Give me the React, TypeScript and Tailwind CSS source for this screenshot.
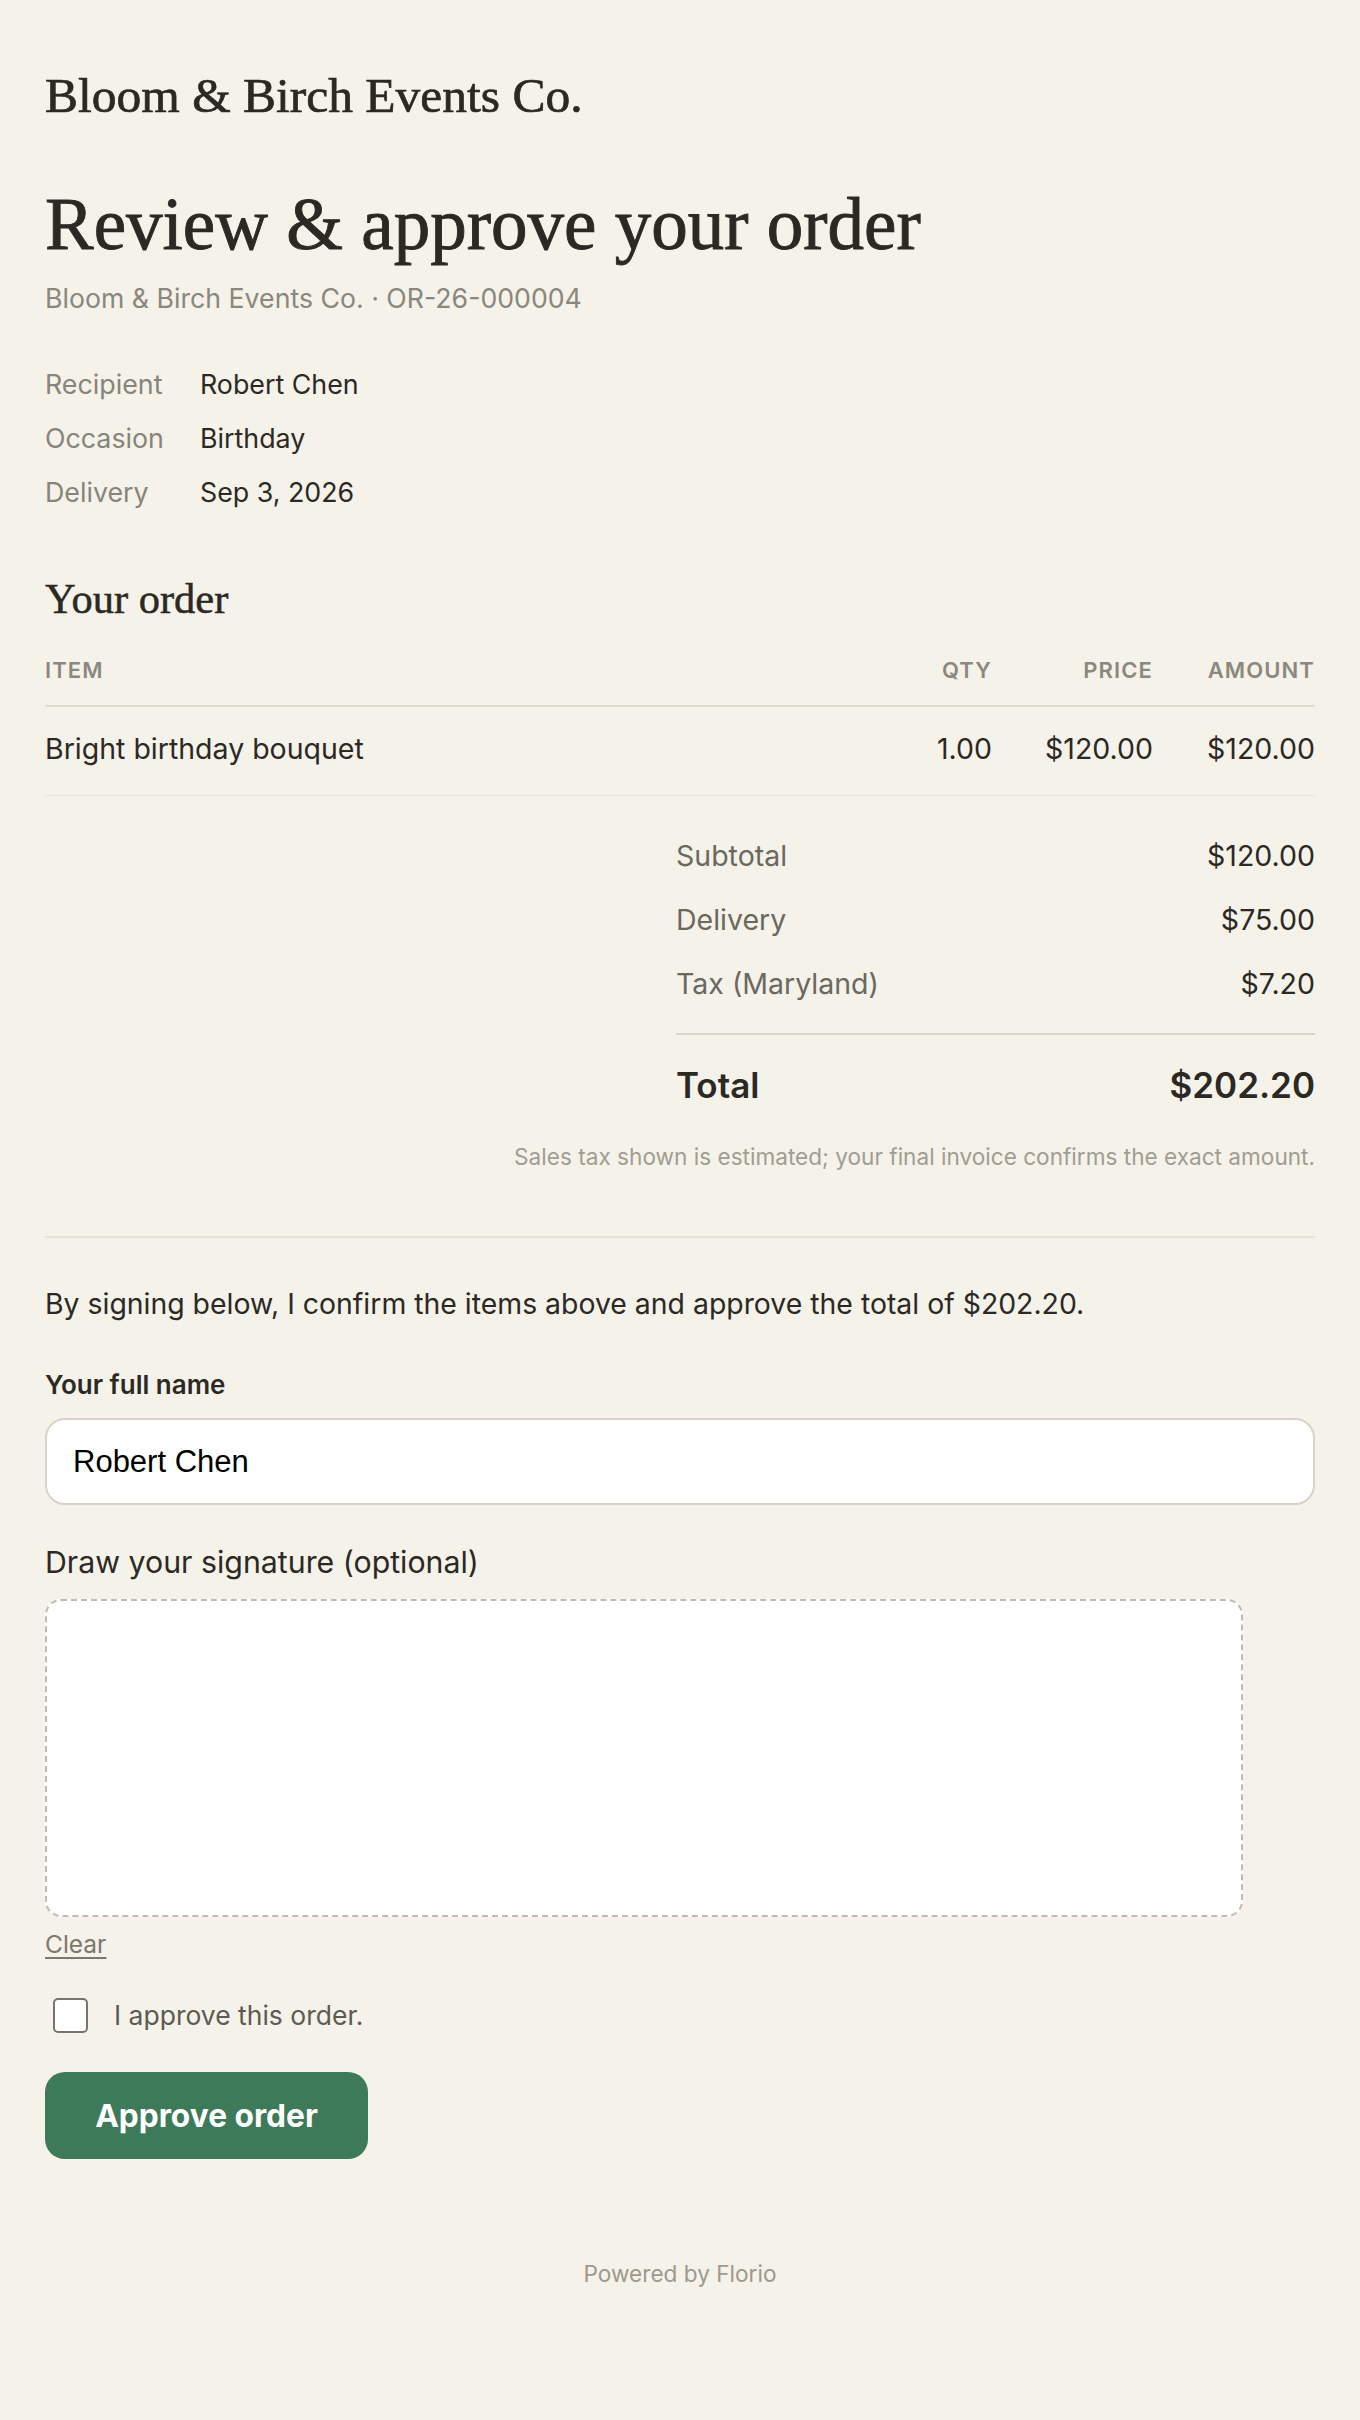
import { useState } from "react";

const details = [
  { label: "Recipient", value: "Robert Chen" },
  { label: "Occasion", value: "Birthday" },
  { label: "Delivery", value: "Sep 3, 2026" },
];

const lines = [
  { name: "Bright birthday bouquet", qty: "1.00", price: "$120.00", amount: "$120.00" },
];

const totals = [
  { label: "Subtotal", value: "$120.00" },
  { label: "Delivery", value: "$75.00" },
  { label: "Tax (Maryland)", value: "$7.20" },
];

const serif = "[font-family:'Liberation_Serif','DejaVu_Serif',serif]";

export default function App() {
  const [name, setName] = useState("Robert Chen");
  const [approved, setApproved] = useState(false);

  return (
    <div className="min-h-[2420px] bg-[#f5f2ea] px-[45px] pt-[68px] pb-[132px] text-[#2c2924] [font-family:Inter,'Noto_Sans',sans-serif]">
      <div className={`${serif} text-[49.5px] leading-[56px] text-[#2c2924] [-webkit-text-stroke:0.7px_#2c2924]`}>
        Bloom &amp; Birch Events Co.
      </div>

      <h1 className={`${serif} mt-[61px] text-[73px] leading-[80px] text-[#2c2924] [-webkit-text-stroke:0.9px_#2c2924]`}>
        Review &amp; approve your order
      </h1>
      <p className="mt-[16px] text-[26.7px] leading-[34px] text-[#8a877d]">
        Bloom &amp; Birch Events Co. · OR-26-000004
      </p>

      <div className="mt-[42px]">
        {details.map((row) => (
          <div key={row.label} className="flex h-[54px] items-center text-[26.8px] leading-[54px]">
            <span className="w-[155px] text-[#87847a]">{row.label}</span>
            <span className="text-[#2c2924]">{row.value}</span>
          </div>
        ))}
      </div>

      <h2 className={`${serif} mt-[56px] text-[42.5px] leading-[48px] text-[#2c2924] [-webkit-text-stroke:0.5px_#2c2924]`}>
        Your order
      </h2>

      <div className="mt-[32px]">
        <div className="flex border-b-2 border-[#dedbd1] pb-[20px] text-[22px] font-semibold uppercase leading-[30px] tracking-[0.05em] text-[#8b887d]">
          <span className="flex-1">Item</span>
          <span className="w-[100px] text-right">Qty</span>
          <span className="w-[161px] text-right">Price</span>
          <span className="w-[162px] text-right">Amount</span>
        </div>
        {lines.map((line) => (
          <div
            key={line.name}
            className="flex border-b border-[#e9e6dd] pt-[24px] pb-[28px] text-[28.5px] leading-[36px] text-[#2c2924]"
          >
            <span className="flex-1">{line.name}</span>
            <span className="w-[100px] text-right">{line.qty}</span>
            <span className="w-[161px] text-right">{line.price}</span>
            <span className="w-[162px] text-right">{line.amount}</span>
          </div>
        ))}
      </div>

      <div className="mt-[42px] ml-auto w-[639px]">
        <div className="flex flex-col gap-[28px]">
          {totals.map((row) => (
            <div key={row.label} className="flex justify-between text-[28.5px] leading-[36px]">
              <span className="text-[#6b685f]">{row.label}</span>
              <span className="text-[#2c2924]">{row.value}</span>
            </div>
          ))}
        </div>
        <div className="mt-[31px] flex justify-between border-t-2 border-[#d9d6cb] pt-[28px] text-[35px] font-semibold leading-[44px] text-[#2c2924]">
          <span>Total</span>
          <span>$202.20</span>
        </div>
      </div>
      <p className="mt-[35px] text-right text-[22.6px] leading-[30px] text-[#a09d92]">
        Sales tax shown is estimated; your final invoice confirms the exact amount.
      </p>

      <div className="mt-[64px] h-[2px] bg-[#e4e1d7]" />

      <p className="mt-[48px] text-[28.4px] leading-[36px] text-[#2c2924]">
        By signing below, I confirm the items above and approve the total of $202.20.
      </p>

      <label className="mt-[47px] block text-[26px] font-semibold leading-[32px] text-[#2c2924]">
        Your full name
      </label>
      <input
        value={name}
        onChange={(e) => setName(e.target.value)}
        className="mt-[17px] block h-[87px] w-full rounded-[20px] border-2 border-[#d6d3c8] bg-white pl-[26px] text-[31px] text-black outline-none [font-family:'Liberation_Sans',Arial,sans-serif]"
      />

      <p className="mt-[38px] text-[30.3px] leading-[38px] text-[#2c2924]">Draw your signature (optional)</p>
      <div className="mt-[18px] h-[318px] w-[1198px] rounded-[16px] border-2 border-dashed border-[#bebbb1] bg-white" />
      <button className="mt-[12px] block text-[24.5px] leading-[30px] text-[#7b786e] underline underline-offset-[4px]">
        Clear
      </button>

      <label className="mt-[39px] ml-[8px] flex items-center gap-[26px] text-[26.5px] leading-[35px] text-[#5d5a52]">
        <input
          type="checkbox"
          checked={approved}
          onChange={(e) => setApproved(e.target.checked)}
          className="h-[35px] w-[35px] appearance-none rounded-[5px] border-2 border-[#77746b] bg-white checked:bg-[#3d7a5a]"
        />
        I approve this order.
      </label>

      <button className="mt-[39px] block h-[87px] w-[323px] rounded-[20px] bg-[#3d7a5a] text-[31.7px] font-bold text-white">
        Approve order
      </button>

      <p className="mt-[100px] text-center text-[22.6px] leading-[30px] text-[#9c998e]">Powered by Florio</p>
    </div>
  );
}
